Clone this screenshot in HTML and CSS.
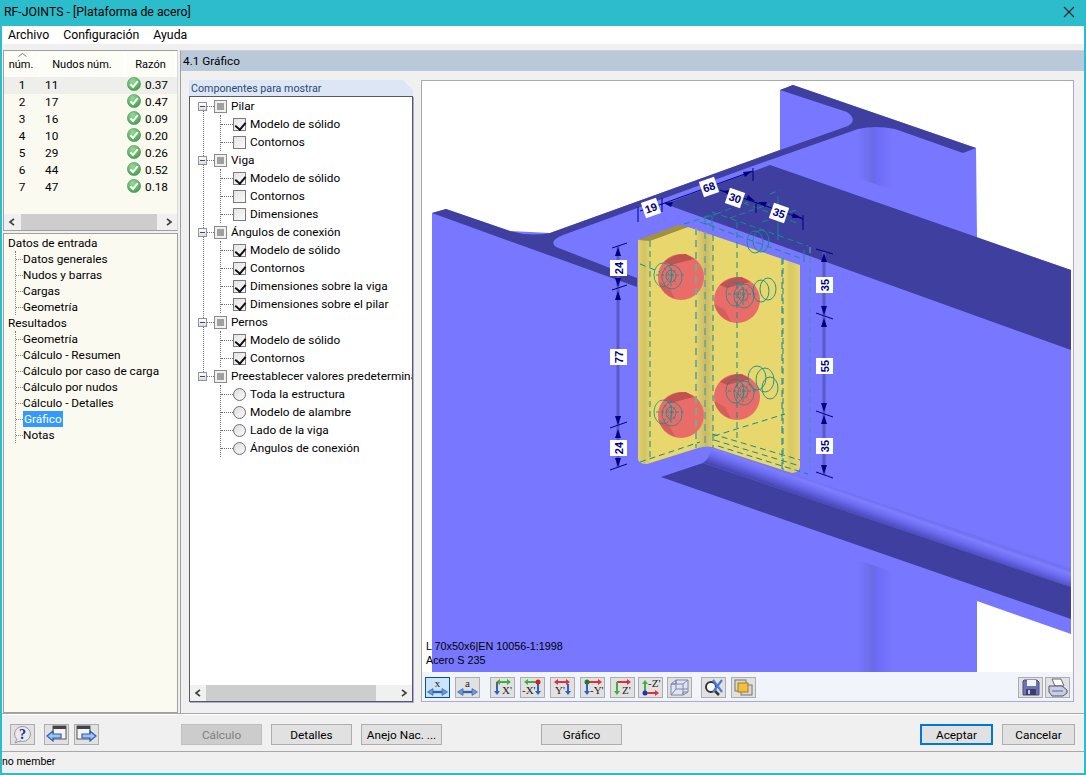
FILE: index.html
```html
<!DOCTYPE html>
<html lang="es">
<head>
<meta charset="utf-8">
<title>RF-JOINTS - [Plataforma de acero]</title>
<link rel="stylesheet" href="styles.css">
</head>
<body>
<svg class="defs" width="0" height="0">
  <defs>
    <radialGradient id="okg" cx="40%" cy="30%" r="75%"><stop offset="0" stop-color="#9ad89a"/><stop offset="1" stop-color="#3f9e4a"/></radialGradient>
    <symbol id="ok" viewBox="0 0 14 14"><circle cx="7" cy="7" r="6.6" fill="url(#okg)" stroke="#4c9a55" stroke-width=".6"/><path d="M3.4 7.2 6 10 10.8 4.2" fill="none" stroke="#fff" stroke-width="2"/></symbol>
    <symbol id="cl" viewBox="0 0 8 8"><path d="M6 .8 2 4l4 3.2" fill="none" stroke="#404040" stroke-width="1.7"/></symbol>
    <symbol id="cr" viewBox="0 0 8 8"><path d="M2 .8 6 4 2 7.2" fill="none" stroke="#404040" stroke-width="1.7"/></symbol>
    <symbol id="dbl" viewBox="0 0 23 8"><path d="M3 4h17" stroke="#2f62b0" stroke-width="2.4"/><path d="M7 .6 1.5 4 7 7.4zM16 .6 21.5 4 16 7.4z" fill="#6f9ade" stroke="#2f62b0" stroke-width=".7"/></symbol>
    <linearGradient id="plateG" x1="638" x2="800" y1="0" y2="0" gradientUnits="userSpaceOnUse">
      <stop offset="0" stop-color="#e2d268"/><stop offset=".04" stop-color="#d2c366"/><stop offset=".08" stop-color="#e8d76c"/>
      <stop offset=".35" stop-color="#e8d76c"/><stop offset=".38" stop-color="#d8ca6a"/><stop offset=".42" stop-color="#c8bb66"/><stop offset=".46" stop-color="#dccd6a"/><stop offset=".47" stop-color="#e8d76c"/>
      <stop offset=".91" stop-color="#e8d76c"/><stop offset=".94" stop-color="#d6c866"/><stop offset=".97" stop-color="#e0d068"/><stop offset="1" stop-color="#e6d66b"/>
    </linearGradient>
    <linearGradient id="webG" x1="858" x2="893" y1="0" y2="0" gradientUnits="userSpaceOnUse">
      <stop offset="0" stop-color="#7777ff"/><stop offset=".45" stop-color="#6a6ae6"/><stop offset=".55" stop-color="#6c6cf8"/><stop offset="1" stop-color="#7777ff"/>
    </linearGradient>
    <linearGradient id="filG" x1="880" y1="523" x2="887" y2="503" gradientUnits="userSpaceOnUse">
      <stop offset="0" stop-color="#4848b4"/><stop offset=".4" stop-color="#6a6af0"/><stop offset=".7" stop-color="#7e7eff"/><stop offset=".85" stop-color="#7070f0"/><stop offset="1" stop-color="#7777ff"/>
    </linearGradient>
    <g id="cluster" fill="none" stroke="#0f8f8f" stroke-width=".8">
      <ellipse cx="-15" cy="-2" rx="9" ry="12"/><ellipse cx="-6" cy="0" rx="10" ry="12"/>
      <ellipse cx="-7" cy="-1" rx="5" ry="6"/>
      <path d="M-22-2H6M-7-14V10M-14-9-1 7M-14 7-1-9" stroke-dasharray="3 2"/>
    </g>
    <g id="bolt">
      <circle r="23" fill="#e96c68"/>
      <path d="M-17-15Q-6-24 5-23L13-18 1-15-10-12Z" fill="#c05252"/>
      <path d="M-23 4Q-20 16-6 22L-12 10Z" fill="#d45e5c"/>
    </g>
  </defs>
</svg>
<div class="app">
  <header class="title">
    <span>RF-JOINTS - [Plataforma de acero]</span>
    <svg class="close" width="12" height="12" viewBox="0 0 12 12"><path d="M1 1l10 10M11 1 1 11" stroke="#222" stroke-width="1.1"/></svg>
  </header>
  <nav class="menu"><span>Archivo</span><span>Configuración</span><span>Ayuda</span></nav>

  <div class="content">
    <aside class="side">
      <section class="table-panel">
        <div class="thead">
          <div class="th th-num"><svg class="sort" width="9" height="4" viewBox="0 0 9 4"><path d="M.5 3.5 4.5.5l4 3" fill="none" stroke="#777"/></svg>núm.</div>
          <div class="th">Nudos núm.</div>
          <div class="th">Razón</div>
        </div>
        <div class="tbody">
          <div class="tr sel"><span class="n">1</span><span class="k">11</span><span class="r"><svg class="ok"><use href="#ok"/></svg>0.37</span></div>
          <div class="tr"><span class="n">2</span><span class="k">17</span><span class="r"><svg class="ok"><use href="#ok"/></svg>0.47</span></div>
          <div class="tr"><span class="n">3</span><span class="k">16</span><span class="r"><svg class="ok"><use href="#ok"/></svg>0.09</span></div>
          <div class="tr"><span class="n">4</span><span class="k">10</span><span class="r"><svg class="ok"><use href="#ok"/></svg>0.20</span></div>
          <div class="tr"><span class="n">5</span><span class="k">29</span><span class="r"><svg class="ok"><use href="#ok"/></svg>0.26</span></div>
          <div class="tr"><span class="n">6</span><span class="k">44</span><span class="r"><svg class="ok"><use href="#ok"/></svg>0.52</span></div>
          <div class="tr"><span class="n">7</span><span class="k">47</span><span class="r"><svg class="ok"><use href="#ok"/></svg>0.18</span></div>
        </div>
        <div class="hscroll hs-table">
          <svg class="arr"><use href="#cl"/></svg><div class="track"><div class="thumb"></div></div><svg class="arr"><use href="#cr"/></svg>
        </div>
      </section>
      <section class="nav-panel">
        <div class="nav-root">Datos de entrada</div>
        <div class="nav-kids">
          <div class="nav-item">Datos generales</div>
          <div class="nav-item">Nudos y barras</div>
          <div class="nav-item">Cargas</div>
          <div class="nav-item">Geometría</div>
        </div>
        <div class="nav-root">Resultados</div>
        <div class="nav-kids">
          <div class="nav-item">Geometría</div>
          <div class="nav-item">Cálculo - Resumen</div>
          <div class="nav-item">Cálculo por caso de carga</div>
          <div class="nav-item">Cálculo por nudos</div>
          <div class="nav-item">Cálculo - Detalles</div>
          <div class="nav-item"><span class="nav-sel">Gráfico</span></div>
          <div class="nav-item">Notas</div>
        </div>
      </section>
    </aside>

    <main class="main">
      <div class="main-head">4.1 Gráfico</div>
      <div class="main-body">
        <section class="group">
          <div class="group-title">Componentes para mostrar</div>
          <div class="tree-box">
            <div class="tree">
              <div class="root-line"></div>
              <div class="tnode"><span class="exp"></span><span class="stub"></span><span class="tri"></span><span class="lab">Pilar</span></div>
              <div class="kids">
                <div class="kid"><span class="cb on"></span><span>Modelo de sólido</span></div>
                <div class="kid"><span class="cb"></span><span>Contornos</span></div>
              </div>
              <div class="tnode"><span class="exp"></span><span class="stub"></span><span class="tri"></span><span class="lab">Viga</span></div>
              <div class="kids">
                <div class="kid"><span class="cb on"></span><span>Modelo de sólido</span></div>
                <div class="kid"><span class="cb"></span><span>Contornos</span></div>
                <div class="kid"><span class="cb"></span><span>Dimensiones</span></div>
              </div>
              <div class="tnode"><span class="exp"></span><span class="stub"></span><span class="tri"></span><span class="lab">Ángulos de conexión</span></div>
              <div class="kids">
                <div class="kid"><span class="cb on"></span><span>Modelo de sólido</span></div>
                <div class="kid"><span class="cb on"></span><span>Contornos</span></div>
                <div class="kid"><span class="cb on"></span><span>Dimensiones sobre la viga</span></div>
                <div class="kid"><span class="cb on"></span><span>Dimensiones sobre el pilar</span></div>
              </div>
              <div class="tnode"><span class="exp"></span><span class="stub"></span><span class="tri"></span><span class="lab">Pernos</span></div>
              <div class="kids">
                <div class="kid"><span class="cb on"></span><span>Modelo de sólido</span></div>
                <div class="kid"><span class="cb on"></span><span>Contornos</span></div>
              </div>
              <div class="tnode last"><span class="exp"></span><span class="stub"></span><span class="tri"></span><span class="lab">Preestablecer valores predetermina</span></div>
              <div class="kids">
                <div class="kid"><span class="rb"></span><span>Toda la estructura</span></div>
                <div class="kid"><span class="rb"></span><span>Modelo de alambre</span></div>
                <div class="kid"><span class="rb"></span><span>Lado de la viga</span></div>
                <div class="kid"><span class="rb"></span><span>Ángulos de conexión</span></div>
              </div>
            </div>
            <div class="hscroll hs-tree">
              <svg class="arr"><use href="#cl"/></svg><div class="track"><div class="thumb"></div></div><svg class="arr"><use href="#cr"/></svg>
            </div>
          </div>
        </section>

        <section class="viewer">
          <svg class="scene" width="651" height="591" viewBox="422 81 651 591">
            <path fill="#7777ff" d="M432 213 446 209 510 231 550 233 780 150 780 90 793 85 976 148 977 238 1071 270V634L977 601V672H432Z"/>
            <path fill="url(#webG)" d="M858 128Q875 125 893 129V190L858 178Z"/>
            <path fill="url(#webG)" d="M858 560 893 572V672H858Z"/>
            <path fill="#3f3fa0" d="M432 213 446 209 510 231Q530 237 550 233L780 150 848 126Q858 120 847 112L780 90 793 85 976 148 963 153 895 129Q875 125 858 129L750 167 563 235Q548 241 556 247L610 268 637 278V287Z"/>
            <path fill="#3f3fa0" d="M665 204 770 165 1071 270V350Z"/>
            <path fill="url(#filG)" d="M703 463Q710 458 712 447L1071 567V587Z"/>
            <path fill="#3f3fa0" d="M661 477 703 463 1071 587V619Z"/>
            <path fill="url(#plateG)" d="M638 240 688 227 800 265V466Q800 472 792 473L715 448Q708 445 698 448L647 464Q638 464 638 458Z"/>
            <path fill="#a09040" d="M638 240 678 225 688 227 650 241Z"/>
            <use href="#bolt" x="681" y="277"/>
            <use href="#bolt" x="737" y="300"/>
            <use href="#bolt" x="681" y="415"/>
            <use href="#bolt" x="737" y="397"/>
            <g fill="none" stroke="#7ea890" stroke-width="2" stroke-dasharray="7 5">
              <path d="M696 228V448M705 232V448M782 258V470"/>
            </g>
            <g fill="none" stroke="#4f93ad" stroke-width="1.500" stroke-dasharray="6 4">
              <path d="M810 247V470"/>
            </g>
            <g fill="none" stroke="#0f8f8f" stroke-width="1" stroke-dasharray="6 4">
              <path d="M650 241V460M713 225V448M737 222V440M783 258V470"/>
              <path d="M712 212 808 246M700 222 800 258M725 196 800 224"/>
              <path d="M640 462 700 442M718 446 808 474M714 440 800 466M712 434 800 460"/>
              <path d="M684 224 716 214M716 214 748 202M730 218 770 204M762 222 796 210M770 194 780 190"/>
              <path d="M714 436 785 414M640 264 660 272"/>
            </g>
            <g fill="none" stroke="#0f8f8f" stroke-width=".9">
              <path d="M705 216h7v8h-7zM778 196V240M804 250V262"/>
              <ellipse cx="755" cy="242" rx="8" ry="11"/><ellipse cx="761" cy="241" rx="8" ry="11"/>
              <ellipse cx="761" cy="291" rx="8" ry="11"/><ellipse cx="768" cy="289" rx="8" ry="11"/>
              <ellipse cx="757" cy="378" rx="9" ry="12"/><ellipse cx="765" cy="380" rx="9" ry="12"/><ellipse cx="770" cy="388" rx="8" ry="11"/>
            </g>
            <use href="#cluster" x="678" y="277"/>
            <use href="#cluster" x="750" y="296"/>
            <use href="#cluster" x="678" y="414"/>
            <use href="#cluster" x="750" y="393"/>
            <g fill="none" stroke="#5a5ac4" stroke-width="3">
              <path d="M618 246V467M824 252V475"/>
            </g>
            <g fill="none" stroke="#000080" stroke-width="1">
              <path d="M612 248 627 243M612 290 627 285M610 428 627 422M610 470 627 464"/>
              <path d="M816 249 833 254M816 313 833 319M816 411 833 417M816 472 833 478"/>
              <path d="M638 207V222M662 198V212M753 168V181M756 202V213M803 215V230"/>
              <path d="M640 211 662 204 753 171M720 190 803 219"/>
            </g>
            <g fill="#000080">
              <path d="M618 247l-3 9h6zM618 287l-3-9h6zM618 291l-3 9h6zM618 425l-3-9h6zM618 429l-3 9h6zM618 467l-3-9h6z"/>
              <path d="M824 253l-3 9h6zM824 315l-3-9h6zM824 318l-3 9h6zM824 412l-3-9h6zM824 415l-3 9h6zM824 474l-3-9h6z"/>
              <path d="M664 203l9-1-2 5zM752 171l-9 1 2 5zM722 191l9-1-2 5zM755 201l-9-1 2-5zM758 202l9 0-2 5zM802 218l-9-5-1 5z"/>
            </g>
            <g class="dim">
              <g transform="translate(618.500 268)"><rect x="-8.500" y="-8" width="17" height="16"/><text transform="rotate(-90)" y="4">24</text></g>
              <g transform="translate(618.500 357)"><rect x="-8.500" y="-8" width="17" height="16"/><text transform="rotate(-90)" y="4">77</text></g>
              <g transform="translate(618.500 448)"><rect x="-8.500" y="-8" width="17" height="16"/><text transform="rotate(-90)" y="4">24</text></g>
              <g transform="translate(824.500 285)"><rect x="-8.500" y="-8" width="17" height="16"/><text transform="rotate(-90)" y="4">35</text></g>
              <g transform="translate(824.500 366)"><rect x="-8.500" y="-8" width="17" height="16"/><text transform="rotate(-90)" y="4">55</text></g>
              <g transform="translate(824.500 446)"><rect x="-8.500" y="-8" width="17" height="16"/><text transform="rotate(-90)" y="4">35</text></g>
              <g transform="translate(651 208) rotate(-19)"><rect x="-8" y="-8" width="16" height="16"/><text y="4">19</text></g>
              <g transform="translate(709 187) rotate(-19)"><rect x="-8" y="-8" width="16" height="16"/><text y="4">68</text></g>
              <g transform="translate(735 198) rotate(19)"><rect x="-8" y="-8" width="16" height="16"/><text y="4">30</text></g>
              <g transform="translate(779 213) rotate(19)"><rect x="-8" y="-8" width="16" height="16"/><text y="4">35</text></g>
            </g>
            <text class="cap" x="426" y="650">L 70x50x6|EN 10056-1:1998</text>
            <text class="cap" x="426" y="664">Acero S 235</text>
          </svg>
          <div class="toolbar">
            <button class="tb active"><svg viewBox="0 0 23 19"><text class="ic-x" x="11.500" y="9" text-anchor="middle">x</text><use href="#dbl" x="0" y="10" width="23" height="8"/></svg></button>
            <button class="tb"><svg viewBox="0 0 23 19"><text class="ic-x" x="11.500" y="9" text-anchor="middle">a</text><use href="#dbl" x="0" y="10" width="23" height="8"/></svg></button>
            <button class="tb g2"><svg viewBox="0 0 23 19"><path d="M7 4h12" stroke="#3cb043" stroke-width="2"/><path d="M16 1l4 3-4 3zM9 1 5 4l4 3z" fill="#3cb043"/><path d="M6 4v2" stroke="#e03030" stroke-width="2"/><path d="M6 6v9" stroke="#2a62c8" stroke-width="2"/><path d="M3 13l3 4 3-4z" fill="#2a62c8"/><text class="ic-t" x="11" y="16">X'</text></svg></button>
            <button class="tb"><svg viewBox="0 0 23 19"><path d="M5 4h12" stroke="#3cb043" stroke-width="2"/><path d="M7 1 3 4l4 3z" fill="#3cb043"/><circle cx="17" cy="4" r="2.500" fill="#d02020"/><path d="M17 6v9" stroke="#2a62c8" stroke-width="2"/><path d="M14 13l3 4 3-4z" fill="#2a62c8"/><text class="ic-t" x="1" y="16">-X'</text></svg></button>
            <button class="tb"><svg viewBox="0 0 23 19"><path d="M5 4h12" stroke="#e03040" stroke-width="2"/><path d="M7 1 3 4l4 3zM15 1l4 3-4 3z" fill="#e03040"/><path d="M17 6v9" stroke="#2a62c8" stroke-width="2"/><path d="M14 13l3 4 3-4z" fill="#2a62c8"/><text class="ic-t" x="4" y="16">Y'</text></svg></button>
            <button class="tb"><svg viewBox="0 0 23 19"><path d="M7 4h12" stroke="#e03040" stroke-width="2"/><path d="M17 1l4 3-4 3z" fill="#e03040"/><circle cx="6" cy="4" r="2.500" fill="#1c7a2a"/><path d="M6 6v9" stroke="#2a62c8" stroke-width="2"/><path d="M3 13l3 4 3-4z" fill="#2a62c8"/><text class="ic-t" x="9" y="16">-Y'</text></svg></button>
            <button class="tb"><svg viewBox="0 0 23 19"><path d="M6 4h12" stroke="#e03040" stroke-width="2"/><path d="M16 1l4 3-4 3z" fill="#e03040"/><path d="M6 4v11" stroke="#3cb043" stroke-width="2"/><path d="M3 13l3 4 3-4z" fill="#3cb043"/><text class="ic-t" x="11" y="16">Z'</text></svg></button>
            <button class="tb"><svg viewBox="0 0 23 19"><path d="M6 14V4" stroke="#3cb043" stroke-width="2"/><path d="M3 6l3-4 3 4z" fill="#3cb043"/><circle cx="6" cy="15" r="2.500" fill="#1c30c0"/><path d="M8 15h10" stroke="#e03040" stroke-width="2"/><path d="M16 12l4 3-4 3z" fill="#e03040"/><text class="ic-t" x="9" y="9">-Z'</text></svg></button>
            <button class="tb"><svg viewBox="0 0 23 19"><path d="M8 2h12v12H15v3H3V6H8zM3 6h12v11M15 6l5-4M3 6 8 2M15 17l5-3M8 2v9l-5 6M8 11h12" fill="#dfe3f2" stroke="#7d86a8" stroke-width="1"/></svg></button>
            <button class="tb g3"><svg viewBox="0 0 23 19"><circle cx="9" cy="9" r="5" fill="#fff" stroke="#333" stroke-width="2"/><path d="M13 13l4 4" stroke="#333" stroke-width="2.500"/><path d="M11 2l9 12M20 2 11 14" stroke="#4a7fd8" stroke-width="2.200"/></svg></button>
            <button class="tb"><svg viewBox="0 0 23 19"><rect x="3" y="2" width="11" height="11" fill="#d8d8d8" stroke="#777"/><rect x="9" y="7" width="11" height="10" fill="#d8d8d8" stroke="#777"/><rect x="6" y="5" width="10" height="9" fill="#f0c040" stroke="#a87a10"/></svg></button>
            <button class="tb push"><svg viewBox="0 0 23 19"><path d="M5 2h13l2 2v13H4V3z" fill="#6d74b4" stroke="#4a4f8a"/><rect x="8" y="2" width="9" height="6" fill="#f4f4fa"/><rect x="7" y="11" width="10" height="6" fill="#3a3f70"/><rect x="9" y="12" width="2" height="4" fill="#c8c8e0"/></svg></button>
            <button class="tb print"><svg viewBox="0 0 23 19"><path d="M6 1h9l3 7H9z" fill="#fff" stroke="#667"/><path d="M3 8h13l5 4v3l-4 3H6l-3-4z" fill="#c8ccec" stroke="#556"/><path d="M6 13h11" stroke="#667"/></svg></button>
          </div>
        </section>
      </div>
    </main>
  </div>

  <div class="actions">
    <button class="tb"><svg viewBox="0 0 23 19"><ellipse cx="11.500" cy="9" rx="8" ry="7.500" fill="#e8e8ee" stroke="#9a9aa8"/><path d="M6 14 4 18l6-2.500" fill="#e8e8ee" stroke="#9a9aa8"/><text class="ic-q" x="11.500" y="13.500" text-anchor="middle">?</text></svg></button>
    <button class="tb nav1"><svg viewBox="0 0 23 19"><rect x="8" y="1" width="13" height="13" fill="#f4f4f4" stroke="#555"/><rect x="8" y="1" width="13" height="3" fill="#444"/><path d="M2 11l6-5v3h8v4H8v3z" fill="#9cc4f4" stroke="#2a5ab8" stroke-width="1.200"/></svg></button>
    <button class="tb"><svg viewBox="0 0 23 19"><rect x="2" y="1" width="13" height="13" fill="#f4f4f4" stroke="#555"/><rect x="2" y="1" width="13" height="3" fill="#444"/><path d="M21 11l-6-5v3H7v4h8v3z" fill="#9cc4f4" stroke="#2a5ab8" stroke-width="1.200"/></svg></button>
    <button class="btn disabled first">Cálculo</button>
    <button class="btn">Detalles</button>
    <button class="btn">Anejo Nac. ...</button>
    <button class="btn graf">Gráfico</button>
    <button class="btn primary right">Aceptar</button>
    <button class="btn cancel">Cancelar</button>
  </div>
  <footer class="status">no member</footer>
</div>
</body>
</html>
```
FILE: styles.css
```css
* { box-sizing: border-box; }
html, body { margin: 0; padding: 0; }
body { width: 1086px; height: 775px; overflow: hidden; background: #f0f0f0; font: 11.800px/16px Roboto, sans-serif; color: #000; }
.defs { position: absolute; }
.app { width: 1086px; height: 775px; display: flex; flex-direction: column; background: #f0f0f0; border: solid #2bbdcb; border-width: 0 2px 2px 2px; }

.title { height: 26px; margin: 0 -2px; padding: 0 10px 2px 4px; display: flex; align-items: center; justify-content: space-between; background: #2bbdcb; font-size: 12.300px; }
.close { margin-right: 1px; }
.menu { height: 18px; display: flex; gap: 14px; padding: 0 0 0 6px; background: #fff; align-items: center; font-size: 12.300px; }

.content { height: 669px; display: flex; padding-top: 6px; }
.side { width: 175px; margin-left: 1px; display: flex; flex-direction: column; gap: 2px; }
.table-panel { height: 181px; background: #fbfaf1; border: solid #a0a0a0; border-width: 1px 0 1px 1px; display: flex; flex-direction: column; border-right: 1px solid #d8d8d8; }
.thead { height: 25px; margin-top: 1px; display: grid; grid-template-columns: 36px 86px 1fr; background: #fdfdf8; font-size: 11px; }
.th { position: relative; display: flex; align-items: center; justify-content: center; border-right: 2px solid #fff; padding-top: 2px; }
.sort { position: absolute; left: 14px; top: 1px; }
.tbody { height: 139px; }
.tr { height: 17px; display: grid; grid-template-columns: 36px 86px 1fr; align-items: center; }
.tr.sel { background: #eeeeea; }
.n { text-align: center; }
.k { padding-left: 5px; }
.r { display: flex; align-items: center; gap: 4px; padding-left: 1px; }
.ok { width: 14px; height: 14px; flex: none; margin-top: -2px; }

.hscroll { display: flex; align-items: center; background: #f0f0f0; height: 16px; }
.hscroll .arr { width: 8px; height: 8px; margin: 0 4px; flex: none; }
.hscroll .track { flex: 1; height: 16px; }
.thumb { height: 100%; background: #cdcdcd; }
.hs-table .thumb { width: 136px; }
.hs-table .track { padding-left: 1px; }
.hs-tree .thumb { width: 170px; }

.nav-panel { flex: 1; background: #fbfaf1; border: 1px solid #a0a0a0; padding-top: 1px; padding-left: 4px; }
.nav-root { height: 16px; line-height: 16px; }
.nav-kids { margin-left: 7px; border-left: 1px dotted #808080; }
.nav-item { height: 16px; display: flex; align-items: center; }
.nav-item::before { content: ""; width: 7px; border-top: 1px dotted #808080; flex: none; }
.nav-sel { background: #3399ff; color: #fff; padding: 0 1px; line-height: 16px; }

.main { flex: 1; margin-left: 2px; border-left: 1px solid #a0a0a0; border-top: 1px solid #d0d0d0; display: flex; flex-direction: column; }
.main-head { height: 20px; background: #b9c9d9; padding: 0 0 0 2px; line-height: 20px; }
.main-body { flex: 1; display: flex; padding: 9px 0 11px 8px; gap: 8px; }

.group { width: 224px; display: flex; flex-direction: column; }
.group-title { height: 16px; background: #dde6f4; color: #2a4a78; padding-left: 2px; font-size: 10.700px; line-height: 17px; clip-path: polygon(0 0, 214px 0, 100% 10px, 100% 100%, 0 100%); }
.tree-box { flex: 1; border: 1px solid #5a5a5a; box-shadow: 1px 1px 0 #a8a8e6; background: #fff; display: flex; flex-direction: column; min-height: 0; }
.tree { flex: 1; position: relative; padding: 0 0 0 8px; overflow: hidden; }
.root-line { position: absolute; left: 13px; top: 9px; height: 270px; border-left: 1px dotted #707070; }
.tnode, .kid { height: 18px; display: flex; align-items: center; white-space: nowrap; }
.exp { width: 9px; height: 9px; flex: none; border: 1px solid #919191; background: linear-gradient(#fff, #dcdcdc); position: relative; z-index: 1; }
.exp::after { content: ""; position: absolute; left: 1px; right: 1px; top: 3px; border-top: 1px solid #2a4a90; }
.stub { width: 7px; border-top: 1px dotted #707070; flex: none; }
.tri { width: 13px; height: 13px; flex: none; border: 1px solid #8a8a8a; background: #f0f0f0; position: relative; margin-right: 4px; }
.tri::after { content: ""; position: absolute; left: 2px; top: 2px; width: 7px; height: 7px; background: #a0a0a0; }
.kids { margin-left: 22px; border-left: 1px dotted #707070; position: relative; }
.kid::before { content: ""; width: 12px; border-top: 1px dotted #707070; flex: none; }
.cb { width: 13px; height: 13px; flex: none; margin-right: 4px; border: 1px solid #7a7a7a; background: linear-gradient(135deg, #e4e4e4, #fafafa); position: relative; }
.cb.on::after { content: ""; position: absolute; left: 3px; top: 1px; width: 5px; height: 8px; border: solid #111; border-width: 0 2px 2px 0; transform: rotate(40deg); }
.rb { width: 13px; height: 13px; flex: none; margin-right: 4px; border: 1px solid #6e6e6e; border-radius: 50%; background: linear-gradient(135deg, #dcdcdc, #fbfbfb); }
.hs-tree { flex: none; }
.hs-tree .track { padding-right: 19px; }

.viewer { width: 653px; display: flex; flex-direction: column; border: solid; border-width: 1px; border-color: #aaa #a8a8e6 #a8a8e6 #aaa; background: #fff; }
.scene { display: block; flex: none; background: #fff; }
.dim rect { fill: #fff; }
.dim text { font: bold 11px "Liberation Sans", sans-serif; fill: #000080; text-anchor: middle; }
.cap { font: 10.800px "Liberation Sans", sans-serif; fill: #000; }
.toolbar { flex: 1; display: flex; align-items: flex-start; gap: 5px; padding: 5px 3px 0 3px; background: #f1f4fa; }
.tb { width: 25px; height: 21px; flex: none; padding: 0; margin: 0; background: #e1e1e1; border: 1px solid #adadad; display: block; }
.tb svg { display: block; width: 23px; height: 19px; }
.tb.active { background: #cce4f7; border-color: #005499; }
.tb.g2 { margin-left: 5px; }
.tb.g3 { margin-left: 4px; }
.tb.push { margin-left: auto; }
.tb.print { margin-left: -3px; }
.ic-t { font: 11px "Liberation Serif", serif; fill: #222; }
.ic-x { font: 11px "Liberation Serif", serif; fill: #222; }
.ic-q { font: bold 14px "Liberation Serif", serif; fill: #1c2e78; }
.toolbar .tb:nth-child(8) { margin-left: -2px; }
.toolbar .tb:nth-child(9) { margin-left: -1px; }

.actions { height: 39px; display: flex; align-items: flex-start; padding: 10px 9px 0 8px; border-top: 1px solid #a8a8a8; border-bottom: 1px solid #a8a8a8; box-shadow: inset 0 1px 0 #fff; }
.actions .tb { margin-right: 9px; }
.actions .nav1 { margin-right: 5px; }
.btn { width: 81px; height: 21px; padding: 0; margin: 0 9px 0 0; flex: none; background: #e1e1e1; border: 1px solid #adadad; font: 11.800px Roboto, sans-serif; color: #000; }
.btn.disabled { background: #cccccc; border-color: #bfbfbf; color: #808080; }
.btn.first { margin-left: 73px; }
.btn.graf { margin-left: 90px; }
.btn.right, .btn.cancel { width: 73px; }
.btn.right { margin-left: auto; }
.btn.primary { border: 2px solid #0078d7; }
.btn.cancel { margin-right: 0; }
.status { height: 20px; padding: 0; line-height: 19px; font-size: 10.500px; }
```
